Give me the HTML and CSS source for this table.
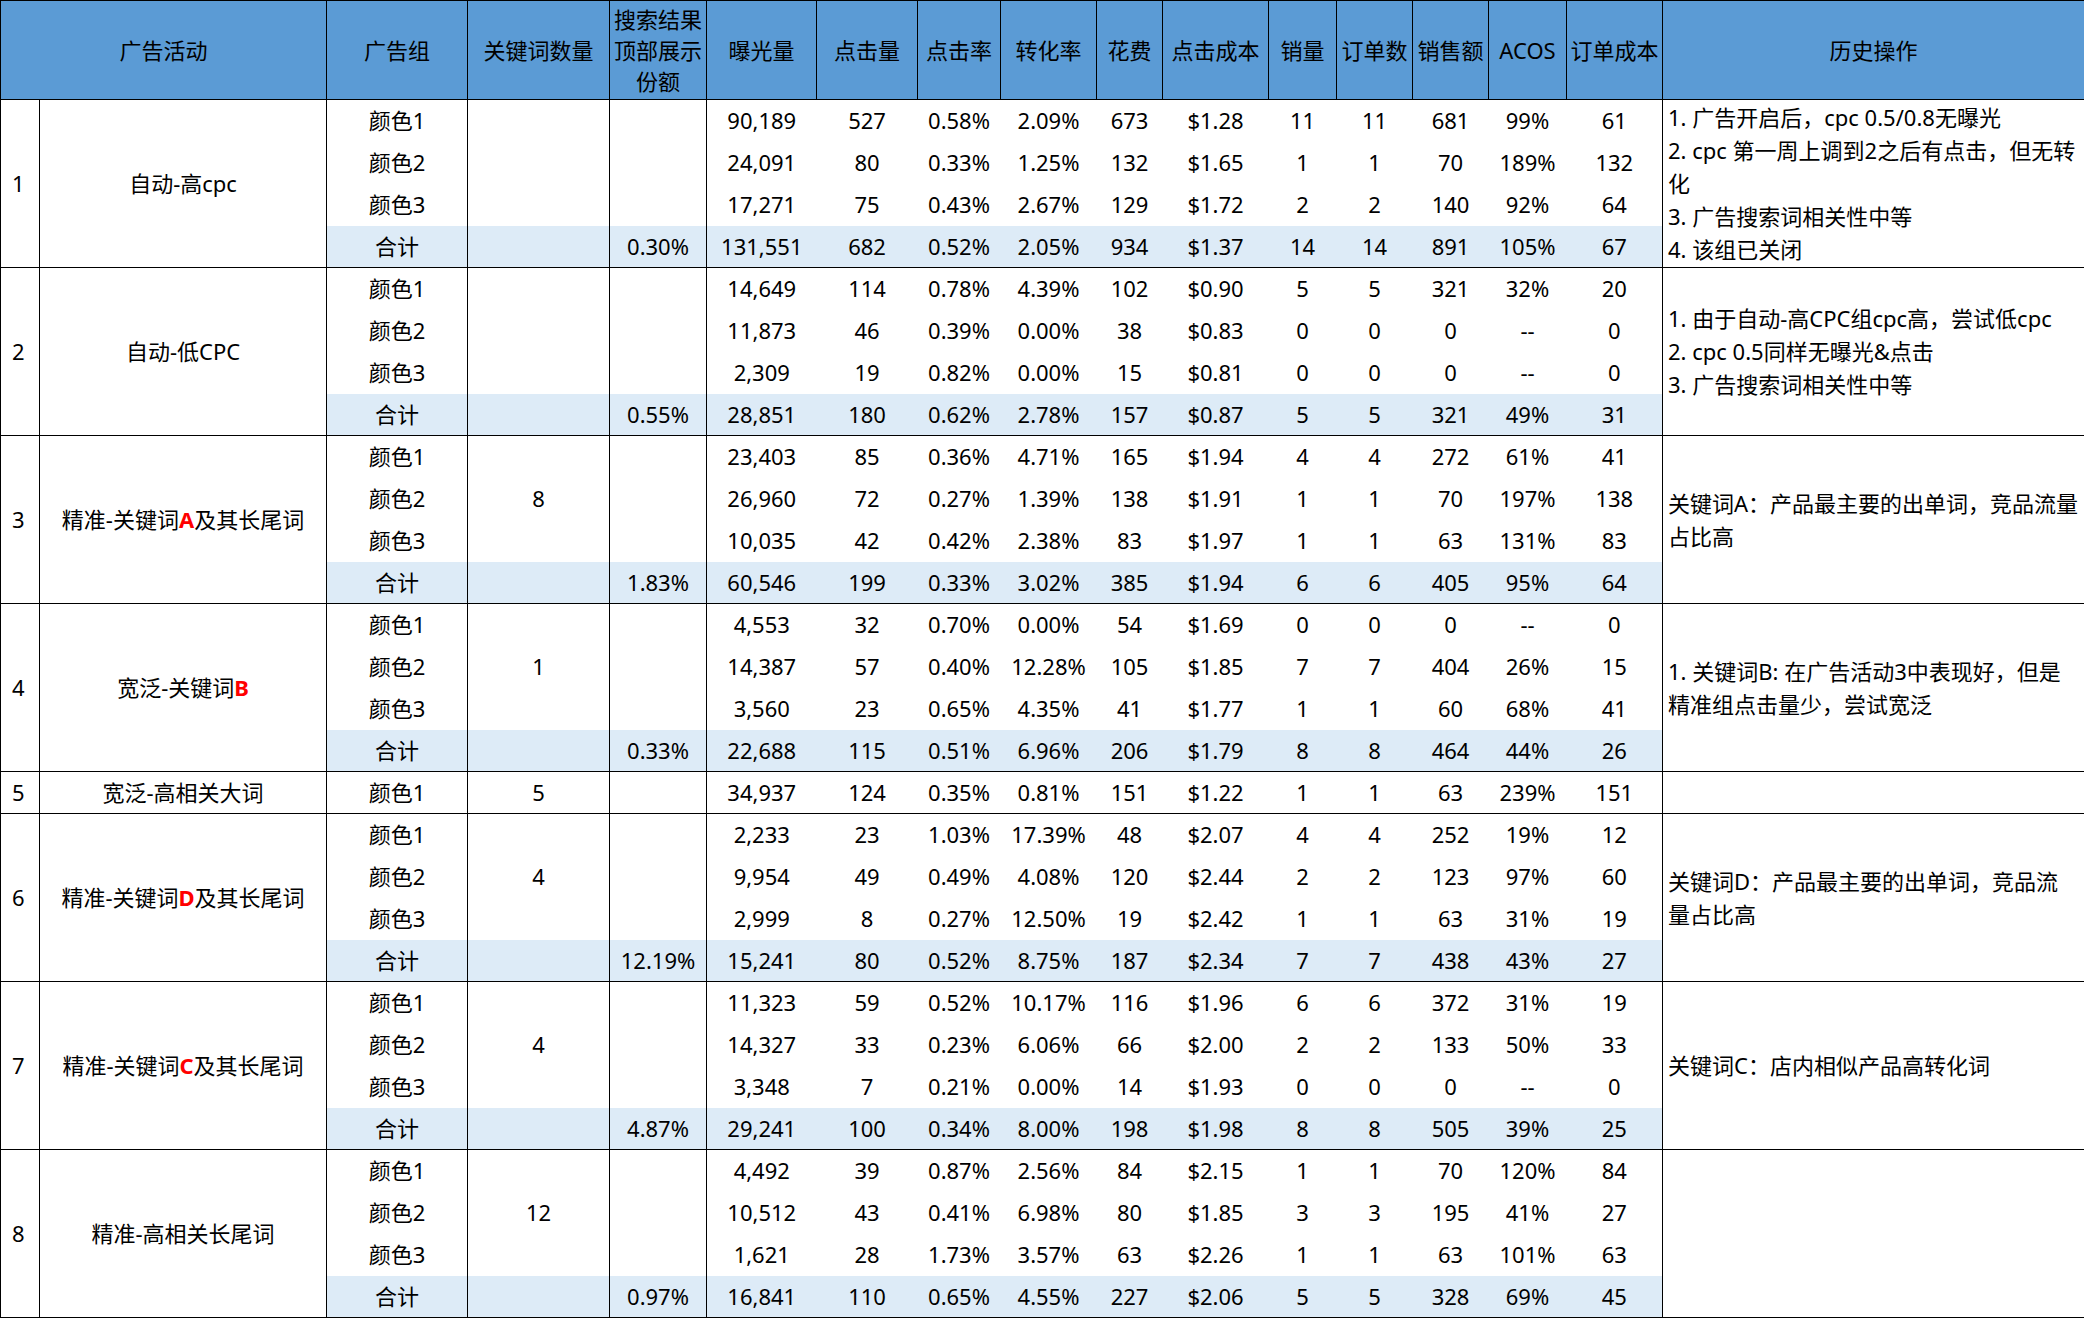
FILE: index.html
```html
<!DOCTYPE html>
<html lang="zh-CN">
<head>
<meta charset="utf-8">
<title>广告活动数据</title>
<link rel="stylesheet" href="styles.css">
</head>
<body>
<table class="sheet">
  <colgroup>
    <col class="ln" style="width:39px">
    <col class="ln" style="width:287px">
    <col class="ln" style="width:141px">
    <col class="ln" style="width:142px">
    <col class="ln" style="width:97px">
    <col style="width:110px">
    <col style="width:101px">
    <col style="width:83px">
    <col style="width:96px">
    <col style="width:66px">
    <col style="width:106px">
    <col style="width:68px">
    <col style="width:76px">
    <col style="width:76px">
    <col style="width:78px">
    <col class="ln" style="width:96px">
    <col style="width:422px">
  </colgroup>
  <thead>
    <tr>
      <th colspan="2">广告活动</th>
      <th>广告组</th>
      <th>关键词数量</th>
      <th>搜索结果<br>顶部展示<br>份额</th>
      <th>曝光量</th>
      <th>点击量</th>
      <th>点击率</th>
      <th>转化率</th>
      <th>花费</th>
      <th>点击成本</th>
      <th>销量</th>
      <th>订单数</th>
      <th>销售额</th>
      <th>ACOS</th>
      <th>订单成本</th>
      <th>历史操作</th>
    </tr>
  </thead>
  <tbody>
    <!-- 1 -->
    <tr class="grp">
      <td class="idx" rowspan="4">1</td>
      <td rowspan="4">自动-高cpc</td>
      <td>颜色1</td><td rowspan="3"></td><td rowspan="3"></td>
      <td>90,189</td><td>527</td><td>0.58%</td><td>2.09%</td><td>673</td><td>$1.28</td><td>11</td><td>11</td><td>681</td><td>99%</td><td>61</td>
      <td class="note" rowspan="4">1. 广告开启后，cpc 0.5/0.8无曝光<br>2. cpc 第一周上调到2之后有点击，但无转<br>化<br>3. 广告搜索词相关性中等<br>4. 该组已关闭</td>
    </tr>
    <tr><td>颜色2</td><td>24,091</td><td>80</td><td>0.33%</td><td>1.25%</td><td>132</td><td>$1.65</td><td>1</td><td>1</td><td>70</td><td>189%</td><td>132</td></tr>
    <tr><td>颜色3</td><td>17,271</td><td>75</td><td>0.43%</td><td>2.67%</td><td>129</td><td>$1.72</td><td>2</td><td>2</td><td>140</td><td>92%</td><td>64</td></tr>
    <tr class="sum"><td>合计</td><td></td><td>0.30%</td><td>131,551</td><td>682</td><td>0.52%</td><td>2.05%</td><td>934</td><td>$1.37</td><td>14</td><td>14</td><td>891</td><td>105%</td><td>67</td></tr>
    <!-- 2 -->
    <tr class="grp">
      <td class="idx" rowspan="4">2</td>
      <td rowspan="4">自动-低CPC</td>
      <td>颜色1</td><td rowspan="3"></td><td rowspan="3"></td>
      <td>14,649</td><td>114</td><td>0.78%</td><td>4.39%</td><td>102</td><td>$0.90</td><td>5</td><td>5</td><td>321</td><td>32%</td><td>20</td>
      <td class="note" rowspan="4">1. 由于自动-高CPC组cpc高，尝试低cpc<br>2. cpc 0.5同样无曝光&amp;点击<br>3. 广告搜索词相关性中等</td>
    </tr>
    <tr><td>颜色2</td><td>11,873</td><td>46</td><td>0.39%</td><td>0.00%</td><td>38</td><td>$0.83</td><td>0</td><td>0</td><td>0</td><td>--</td><td>0</td></tr>
    <tr><td>颜色3</td><td>2,309</td><td>19</td><td>0.82%</td><td>0.00%</td><td>15</td><td>$0.81</td><td>0</td><td>0</td><td>0</td><td>--</td><td>0</td></tr>
    <tr class="sum"><td>合计</td><td></td><td>0.55%</td><td>28,851</td><td>180</td><td>0.62%</td><td>2.78%</td><td>157</td><td>$0.87</td><td>5</td><td>5</td><td>321</td><td>49%</td><td>31</td></tr>
    <!-- 3 -->
    <tr class="grp">
      <td class="idx" rowspan="4">3</td>
      <td rowspan="4">精准-关键词<span class="red">A</span>及其长尾词</td>
      <td>颜色1</td><td rowspan="3">8</td><td rowspan="3"></td>
      <td>23,403</td><td>85</td><td>0.36%</td><td>4.71%</td><td>165</td><td>$1.94</td><td>4</td><td>4</td><td>272</td><td>61%</td><td>41</td>
      <td class="note" rowspan="4">关键词A：产品最主要的出单词，竞品流量<br>占比高</td>
    </tr>
    <tr><td>颜色2</td><td>26,960</td><td>72</td><td>0.27%</td><td>1.39%</td><td>138</td><td>$1.91</td><td>1</td><td>1</td><td>70</td><td>197%</td><td>138</td></tr>
    <tr><td>颜色3</td><td>10,035</td><td>42</td><td>0.42%</td><td>2.38%</td><td>83</td><td>$1.97</td><td>1</td><td>1</td><td>63</td><td>131%</td><td>83</td></tr>
    <tr class="sum"><td>合计</td><td></td><td>1.83%</td><td>60,546</td><td>199</td><td>0.33%</td><td>3.02%</td><td>385</td><td>$1.94</td><td>6</td><td>6</td><td>405</td><td>95%</td><td>64</td></tr>
    <!-- 4 -->
    <tr class="grp">
      <td class="idx" rowspan="4">4</td>
      <td rowspan="4">宽泛-关键词<span class="red">B</span></td>
      <td>颜色1</td><td rowspan="3">1</td><td rowspan="3"></td>
      <td>4,553</td><td>32</td><td>0.70%</td><td>0.00%</td><td>54</td><td>$1.69</td><td>0</td><td>0</td><td>0</td><td>--</td><td>0</td>
      <td class="note" rowspan="4">1. 关键词B: 在广告活动3中表现好，但是<br>精准组点击量少，尝试宽泛</td>
    </tr>
    <tr><td>颜色2</td><td>14,387</td><td>57</td><td>0.40%</td><td>12.28%</td><td>105</td><td>$1.85</td><td>7</td><td>7</td><td>404</td><td>26%</td><td>15</td></tr>
    <tr><td>颜色3</td><td>3,560</td><td>23</td><td>0.65%</td><td>4.35%</td><td>41</td><td>$1.77</td><td>1</td><td>1</td><td>60</td><td>68%</td><td>41</td></tr>
    <tr class="sum"><td>合计</td><td></td><td>0.33%</td><td>22,688</td><td>115</td><td>0.51%</td><td>6.96%</td><td>206</td><td>$1.79</td><td>8</td><td>8</td><td>464</td><td>44%</td><td>26</td></tr>
    <!-- 5 -->
    <tr class="grp">
      <td class="idx">5</td>
      <td>宽泛-高相关大词</td>
      <td>颜色1</td><td>5</td><td></td>
      <td>34,937</td><td>124</td><td>0.35%</td><td>0.81%</td><td>151</td><td>$1.22</td><td>1</td><td>1</td><td>63</td><td>239%</td><td>151</td>
      <td class="note"></td>
    </tr>
    <!-- 6 -->
    <tr class="grp">
      <td class="idx" rowspan="4">6</td>
      <td rowspan="4">精准-关键词<span class="red">D</span>及其长尾词</td>
      <td>颜色1</td><td rowspan="3">4</td><td rowspan="3"></td>
      <td>2,233</td><td>23</td><td>1.03%</td><td>17.39%</td><td>48</td><td>$2.07</td><td>4</td><td>4</td><td>252</td><td>19%</td><td>12</td>
      <td class="note" rowspan="4">关键词D：产品最主要的出单词，竞品流<br>量占比高</td>
    </tr>
    <tr><td>颜色2</td><td>9,954</td><td>49</td><td>0.49%</td><td>4.08%</td><td>120</td><td>$2.44</td><td>2</td><td>2</td><td>123</td><td>97%</td><td>60</td></tr>
    <tr><td>颜色3</td><td>2,999</td><td>8</td><td>0.27%</td><td>12.50%</td><td>19</td><td>$2.42</td><td>1</td><td>1</td><td>63</td><td>31%</td><td>19</td></tr>
    <tr class="sum"><td>合计</td><td></td><td>12.19%</td><td>15,241</td><td>80</td><td>0.52%</td><td>8.75%</td><td>187</td><td>$2.34</td><td>7</td><td>7</td><td>438</td><td>43%</td><td>27</td></tr>
    <!-- 7 -->
    <tr class="grp">
      <td class="idx" rowspan="4">7</td>
      <td rowspan="4">精准-关键词<span class="red">C</span>及其长尾词</td>
      <td>颜色1</td><td rowspan="3">4</td><td rowspan="3"></td>
      <td>11,323</td><td>59</td><td>0.52%</td><td>10.17%</td><td>116</td><td>$1.96</td><td>6</td><td>6</td><td>372</td><td>31%</td><td>19</td>
      <td class="note" rowspan="4">关键词C：店内相似产品高转化词</td>
    </tr>
    <tr><td>颜色2</td><td>14,327</td><td>33</td><td>0.23%</td><td>6.06%</td><td>66</td><td>$2.00</td><td>2</td><td>2</td><td>133</td><td>50%</td><td>33</td></tr>
    <tr><td>颜色3</td><td>3,348</td><td>7</td><td>0.21%</td><td>0.00%</td><td>14</td><td>$1.93</td><td>0</td><td>0</td><td>0</td><td>--</td><td>0</td></tr>
    <tr class="sum"><td>合计</td><td></td><td>4.87%</td><td>29,241</td><td>100</td><td>0.34%</td><td>8.00%</td><td>198</td><td>$1.98</td><td>8</td><td>8</td><td>505</td><td>39%</td><td>25</td></tr>
    <!-- 8 -->
    <tr class="grp">
      <td class="idx" rowspan="4">8</td>
      <td rowspan="4">精准-高相关长尾词</td>
      <td>颜色1</td><td rowspan="3">12</td><td rowspan="3"></td>
      <td>4,492</td><td>39</td><td>0.87%</td><td>2.56%</td><td>84</td><td>$2.15</td><td>1</td><td>1</td><td>70</td><td>120%</td><td>84</td>
      <td class="note" rowspan="4"></td>
    </tr>
    <tr><td>颜色2</td><td>10,512</td><td>43</td><td>0.41%</td><td>6.98%</td><td>80</td><td>$1.85</td><td>3</td><td>3</td><td>195</td><td>41%</td><td>27</td></tr>
    <tr><td>颜色3</td><td>1,621</td><td>28</td><td>1.73%</td><td>3.57%</td><td>63</td><td>$2.26</td><td>1</td><td>1</td><td>63</td><td>101%</td><td>63</td></tr>
    <tr class="sum"><td>合计</td><td></td><td>0.97%</td><td>16,841</td><td>110</td><td>0.65%</td><td>4.55%</td><td>227</td><td>$2.06</td><td>5</td><td>5</td><td>328</td><td>69%</td><td>45</td></tr>
  </tbody>
</table>
</body>
</html>
```

FILE: styles.css
```css
html, body {
  margin: 0;
  padding: 0;
  background: #ffffff;
}

body {
  font-family: "Noto Sans", "Noto Sans CJK SC", sans-serif;
  font-size: 22px;
  color: #000000;
}

.sheet {
  border-collapse: collapse;
  table-layout: fixed;
  width: 2084px;
  border: 1px solid #000000;
}

.sheet col.ln {
  border-right: 1px solid #000000;
}

.sheet th,
.sheet td {
  padding: 0;
  text-align: center;
  vertical-align: middle;
  line-height: 33px;
  white-space: nowrap;
  font-weight: normal;
}

.sheet thead tr {
  height: 99px;
}

.sheet th {
  background: #5b9bd5;
  border: 1px solid #000000;
  line-height: 31px;
}

.sheet tbody tr {
  height: 42px;
}

.sheet tr.grp {
  border-top: 1px solid #000000;
}

.sheet tr.sum td {
  background: #ddebf7;
}

.sheet td.idx {
  text-align: left;
  padding-left: 11px;
}

.sheet td.note {
  text-align: left;
  padding-left: 5px;
}

.red {
  color: #ff0000;
  font-weight: bold;
}
```
